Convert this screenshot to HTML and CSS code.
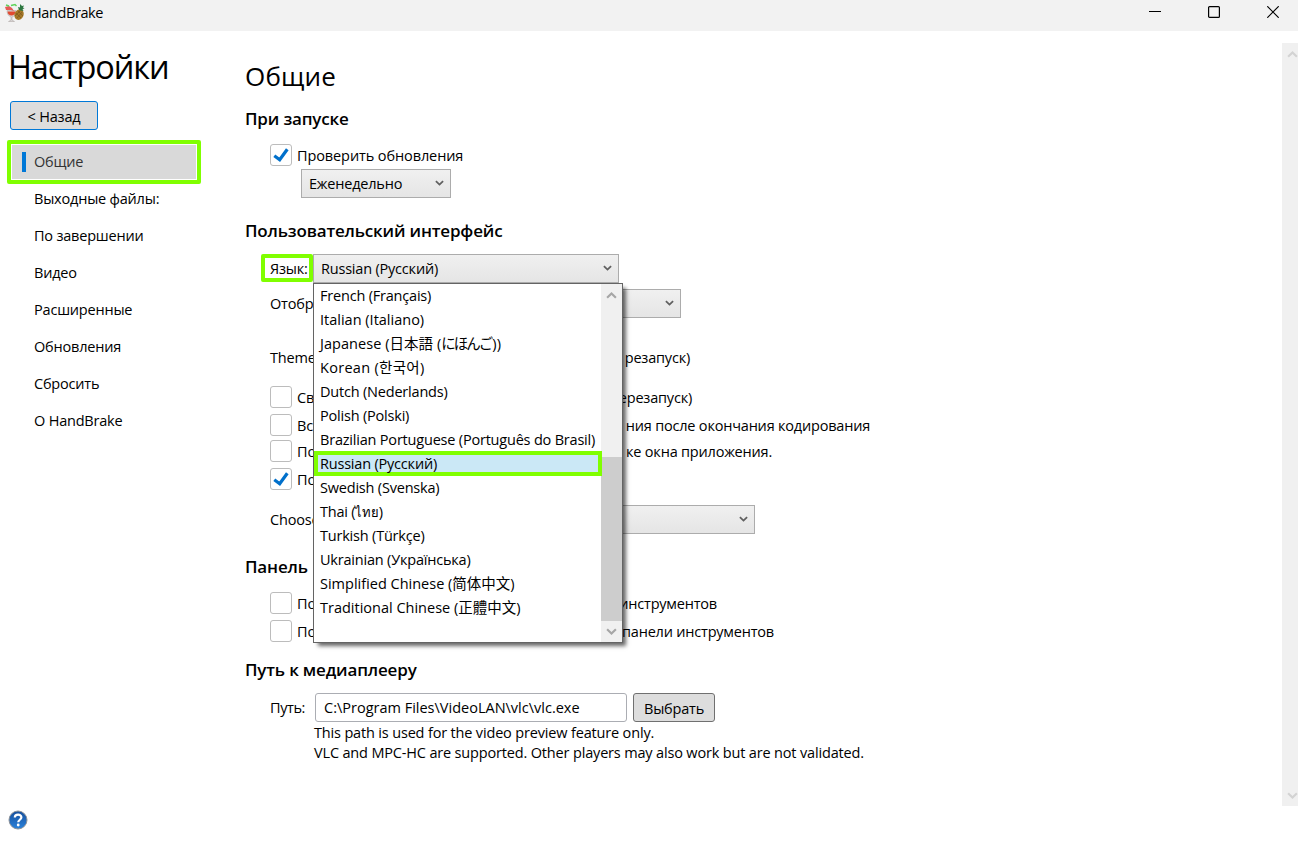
FILE: index.html
```html
<!DOCTYPE html>
<html lang="ru">
<head>
  <meta charset="utf-8">
  <title>HandBrake</title>
  <link rel="stylesheet" href="styles.css">
</head>
<body>

<svg class="defs">
  <symbol id="down" viewBox="0 0 10 6"><path d="M1 1l4 3.8L9 1" fill="none" stroke="currentColor" stroke-width="2"/></symbol>
  <symbol id="up" viewBox="0 0 10 6"><path d="M1 5l4-3.8L9 5" fill="none" stroke="currentColor" stroke-width="2"/></symbol>
  <symbol id="check" viewBox="0 0 20 20"><path d="M3.300 10.800l5.400 4L16.300 4.200" fill="none" stroke="#0070cb" stroke-width="3.200"/></symbol>
</svg>

<div class="titlebar">
  <svg class="logo" viewBox="0 0 20 20">
    <path d="M2 7.500h9c0 4-2 6-4 6.500v3l2.500 1.500H3.500L6 17v-3C3.500 13 2 11 2 7.500z" fill="#d8d5d5" stroke="#aaa3a0" stroke-width=".5"/>
    <path d="M2.500 8.500h8c0 2.500-2 4-4 4s-4-1.500-4-4z" fill="#e24a31"/>
    <path d="M0 4l4-1 3 2 2 3-3-1-5 0z" fill="#e65a55"/>
    <path d="M1 2l3 1M6 2.500l4-1 1.500 1.500" fill="none" stroke="#5ed35a" stroke-width="1.500"/>
    <ellipse cx="14.300" cy="11.500" rx="4.500" ry="5.500" transform="rotate(25 14 11)" fill="#a57827"/>
    <path d="M11 10l5 5M13 8l5 5M17 9l-5 6M15 8l-5 5" stroke="#7c571c" stroke-width=".7"/>
    <path d="M14 7l-1-3 2 .5V1l2 2 2-.5-1 2 1.500 1-2 .5 1 2-3-.5z" fill="#2c7740"/>
  </svg>
  <span class="app-name">HandBrake</span>
  <div class="controls">
    <svg width="12" height="12"><path d="M0 5.500h12" stroke="#000"/></svg>
    <svg width="12" height="12"><rect x=".6" y=".6" width="10.800" height="10.800" rx="1" fill="none" stroke="#000" stroke-width="1.200"/></svg>
    <svg width="12" height="12"><path d="M.3.300l11.400 11.400M11.700.300L.3 11.700" stroke="#000" stroke-width="1.200"/></svg>
  </div>
</div>

<div class="main">
  <div class="sidebar">
    <h1>Настройки</h1>
    <button class="btn back">&lt; Назад</button>
    <ul class="menu">
      <li class="active"><span>Общие</span></li>
      <li>Выходные файлы:</li>
      <li>По завершении</li>
      <li>Видео</li>
      <li>Расширенные</li>
      <li>Обновления</li>
      <li>Сбросить</li>
      <li>О HandBrake</li>
    </ul>
    <svg class="help" viewBox="0 0 20 20">
      <defs><linearGradient id="blue" x2="0" y2="1"><stop stop-color="#174f9c"/><stop offset="1" stop-color="#2b83dc"/></linearGradient></defs>
      <circle cx="10" cy="10" r="9" fill="url(#blue)" stroke="#8d9299"/>
      <path d="M6.800 7.600c0-4 6.600-3.800 6.600-.3 0 2.400-3.200 2.500-3.200 5" fill="none" stroke="#fff" stroke-width="2.200"/>
      <circle cx="10.200" cy="15" r="1.400" fill="#fff"/>
    </svg>
  </div>

  <div class="content">
    <h2>Общие</h2>

    <h3 class="startup">При запуске</h3>
    <div class="row check first"><i class="box"><svg><use href="#check"/></svg></i><span>Проверить обновления</span></div>
    <div class="combo weekly"><span>Еженедельно</span><svg><use href="#down"/></svg></div>

    <h3 class="interface">Пользовательский интерфейс</h3>
    <div class="row lang">
      <label class="marked">Язык:</label>
      <div class="combo"><span>Russian (Русский)</span><svg><use href="#down"/></svg></div>
      <div class="popup">
        <ul>
          <li>French (Français)</li>
          <li class="wide">Italian (Italiano)</li>
          <li lang="ja">Japanese (日本語 (<span class="kana">にほんご</span>))</li>
          <li lang="ko">Korean (한국어)</li>
          <li>Dutch (Nederlands)</li>
          <li>Polish (Polski)</li>
          <li>Brazilian Portuguese (Português do Brasil)</li>
          <li class="selected">Russian (Русский)</li>
          <li>Swedish (Svenska)</li>
          <li>Thai (<span class="thai">ไทย</span>)</li>
          <li>Turkish (Türkçe)</li>
          <li>Ukrainian (Українська)</li>
          <li lang="zh-Hans">Simplified Chinese (简体中文)</li>
          <li lang="zh-Hant">Traditional Chinese (正體中文)</li>
        </ul>
        <div class="scroll">
          <svg><use href="#up"/></svg>
          <div class="thumb"></div>
          <svg><use href="#down"/></svg>
        </div>
      </div>
    </div>
    <div class="row show"><span>Отобр</span><div class="combo"><svg><use href="#down"/></svg></div></div>
    <div class="row theme"><span>Theme</span><span class="tail">резапуск)</span></div>
    <div class="row check c1"><i class="box"></i><span>Св</span><span class="tail">перезапуск)</span></div>
    <div class="row check c2"><i class="box"></i><span>Вс</span><span class="tail">ния после окончания кодирования</span></div>
    <div class="row check c3"><i class="box"></i><span>По</span><span class="tail">ке окна приложения.</span></div>
    <div class="row check c4"><i class="box"><svg><use href="#check"/></svg></i><span>По</span></div>
    <div class="row choose"><span>Choose</span><div class="combo"><svg><use href="#down"/></svg></div></div>

    <h3 class="toolbar">Панель</h3>
    <div class="row check t1"><i class="box"></i><span>По</span><span class="tail">инструментов</span></div>
    <div class="row check t2"><i class="box"></i><span>По</span><span class="tail">панели инструментов</span></div>

    <h3 class="player">Путь к медиаплееру</h3>
    <div class="row path">
      <label>Путь:</label>
      <div class="field">C:\Program Files\VideoLAN\vlc\vlc.exe</div>
      <button class="btn">Выбрать</button>
    </div>
    <p>This path is used for the video preview feature only.</p>
    <p>VLC and MPC-HC are supported. Other players may also work but are not validated.</p>
  </div>

  <div class="scroll page-scroll">
    <svg><use href="#up"/></svg>
    <svg><use href="#down"/></svg>
  </div>
</div>

</body>
</html>
```
FILE: styles.css
```css
* {
  box-sizing: border-box;
}
body {
  margin: 0;
  height: 843px;
  overflow: hidden;
  background: #fff;
  color: #000;
  font: 14.5px/20px 'Open Sans', 'Noto Sans', 'Noto Sans CJK SC', sans-serif;
  letter-spacing: -0.2px;
  white-space: nowrap;
}
h1, h2, h3, p, ul {
  margin: 0;
  padding: 0;
  list-style: none;
}
h1, h2 {
  font-weight: 400;
}
h3 {
  height: 20px;
  font-size: 17px;
  font-weight: 600;
  letter-spacing: -0.17px;
}
svg {
  display: block;
  flex: none;
}
.defs {
  display: none;
}

/* title bar */
.titlebar {
  display: flex;
  height: 31px;
  padding: 0 19px 6px 5px;
  align-items: center;
  background: #f2f2f2;
}
.logo {
  width: 20px;
  height: 20px;
}
.app-name {
  margin-left: 6px;
  letter-spacing: -0.4px;
}
.controls {
  display: flex;
  gap: 47px;
  margin: -1px 0 0 auto;
}

.main {
  display: flex;
  height: 812px;
}

/* sidebar */
.sidebar {
  width: 245px;
  padding: 13px 0 0 7px;
}
h1 {
  height: 48px;
  padding-left: 1px;
  font-size: 32.5px;
  line-height: 46px;
  letter-spacing: -1.1px;
}
.btn {
  display: block;
  height: 29px;
  padding: 2px 0 0;
  border: 1px solid #707070;
  border-radius: 3px;
  background: #ddd;
  color: #000;
  font: inherit;
  letter-spacing: inherit;
}
.back {
  width: 88px;
  margin: 9px 0 10px 3px;
  border-color: #0078d7;
}
.menu li {
  height: 37px;
  padding-left: 27px;
  line-height: 37px;
}
.menu .active {
  display: flex;
  width: 194px;
  height: 44px;
  margin-bottom: -4px;
  padding: 7px 11px;
  align-items: center;
  border: 4px solid #80ff00;
  border-radius: 2px;
  background: #d9d9d9;
  box-shadow: inset 0 0 0 1px #fff;
  color: #333;
}
.active span {
  padding-left: 8px;
  border-left: 4px solid #0078d7;
  line-height: 20px;
}
.help {
  width: 20px;
  height: 20px;
  margin: 371px 0 0 1px;
}

/* settings */
.content {
  flex: 1;
  padding-top: 26px;
}
h2 {
  height: 40px;
  font-size: 26px;
  line-height: 38px;
  letter-spacing: 0.2px;
}
.startup {
  margin-top: 12px;
}
.interface, .toolbar {
  margin-top: 23px;
}
.player {
  margin-top: 18px;
}
.row {
  display: flex;
  height: 22px;
  margin-left: 25px;
  align-items: center;
}
.check span {
  padding-top: 2px;
  letter-spacing: -0.1px;
}
.check .tail {
  letter-spacing: -0.2px;
}
.tail {
  margin-left: auto;
}
.box {
  width: 22px;
  height: 22px;
  margin-right: 5px;
  border: 1px solid #bcbcbc;
  border-radius: 3px;
  background: #fff;
}
.box svg {
  width: 20px;
  height: 20px;
}
.combo {
  display: flex;
  height: 29px;
  padding: 0 6px 0 7px;
  align-items: center;
  justify-content: space-between;
  border: 1px solid #acacac;
  background: linear-gradient(#f0f0f0, #e5e5e5);
}
.combo svg {
  width: 9px;
  height: 6px;
  margin: 0 0 1px auto;
  color: #606060;
}
.first, .t1 {
  margin-top: 15px;
}
.weekly {
  width: 150px;
  margin: 3px 0 0 56px;
}
.lang {
  position: relative;
  height: 29px;
  margin: 13px 0 0 16px;
}
.lang .combo {
  width: 306px;
}
.marked {
  width: 52px;
  height: 28px;
  padding: 0 0 0 5px;
  align-self: flex-start;
  border: 4px solid #80ff00;
  border-radius: 2px;
  line-height: 21px;
}
.show {
  width: 411px;
  height: 29px;
  margin-top: 6px;
}
.show .combo, .choose .combo {
  width: 150px;
  margin-left: auto;
}
.theme {
  width: 420px;
  margin-top: 29px;
}
.c1 {
  width: 422px;
  margin-top: 17px;
}
.c2 {
  width: 600px;
  margin-top: 6px;
}
.c3 {
  width: 502px;
  margin-top: 4px;
}
.c4 {
  margin-top: 6px;
}
.choose {
  width: 485px;
  height: 29px;
  margin-top: 15px;
}
.t1 {
  width: 447px;
}
.t2 {
  width: 504px;
  margin-top: 6px;
}

/* language list */
.popup {
  position: absolute;
  top: 29px;
  left: 52px;
  display: flex;
  width: 310px;
  height: 360px;
  border: 1px solid #646464;
  background: #fff;
  box-shadow: 4px 4px 4px -1px rgba(0,0,0,0.6);
}
.popup ul {
  width: 287px;
}
.popup li {
  height: 24px;
  padding-left: 6px;
  line-height: 24px;
}
.popup .wide {
  letter-spacing: 0;
}
.popup :lang(ja) {
  letter-spacing: 0.05px;
}
.popup :lang(ko) {
  letter-spacing: 0.3px;
}
.popup :lang(zh) {
  letter-spacing: 0;
}
.popup .selected {
  width: 288px;
  height: 25px;
  margin: -1px 0 0;
  padding-left: 2px;
  position: relative;
  z-index: 1;
  border: 4px solid #80ff00;
  background: #cbe8f6;
  line-height: 18px;
}
.popup .kana {
  letter-spacing: -2px;
  margin-right: 1px;
}
.thai {
  font-size: 13px;
}
.scroll {
  display: flex;
  width: 21px;
  padding: 8px 0 7px;
  flex-direction: column;
  align-items: center;
  background: #f0f0f0;
  color: #a6a6a6;
}
.scroll svg {
  width: 11px;
  height: 7px;
}
.thumb {
  width: 21px;
  height: 164px;
  margin: auto 0 7px;
  background: #cdcdcd;
}

/* player path */
.path {
  height: 29px;
  margin-top: 13px;
}
.path label {
  width: 45px;
  letter-spacing: -0.4px;
}
.field {
  width: 312px;
  height: 29px;
  padding-left: 8px;
  border: 1px solid #abadb3;
  border-radius: 3px;
  letter-spacing: 0;
  line-height: 28px;
}
.path .btn {
  width: 82px;
  margin-left: 6px;
}
p {
  margin: 1px 0 0 69px;
  letter-spacing: -0.165px;
}
p + p {
  margin-top: 0;
}

.page-scroll {
  width: 16px;
  height: 763px;
  margin-top: 12px;
  justify-content: space-between;
  align-items: flex-end;
  color: #d3d3d3;
}
```
